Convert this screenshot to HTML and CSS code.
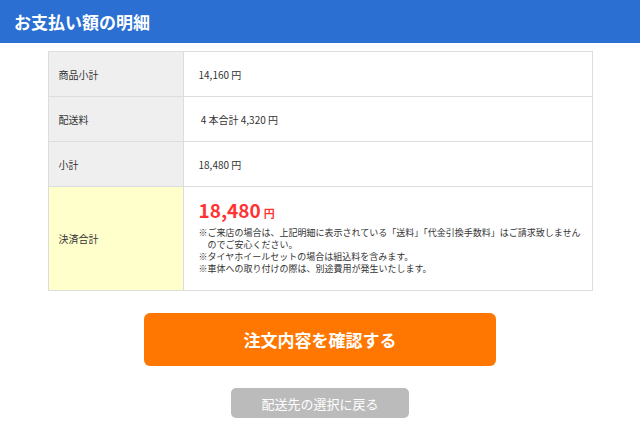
FILE: index.html
```html
<!DOCTYPE html>
<html>
<head>
    <title>お支払い額の明細</title>
    <link rel="stylesheet" href="styles.css">
</head>
<body>
    <div class="page-header">
        <h1>お支払い額の明細</h1>
    </div>

    <table class="detail-table">
        <tr>
            <th>商品小計</th>
            <td>14,160 円</td>
        </tr>
        <tr>
            <th>配送料</th>
            <td>&nbsp;4 本合計 4,320 円</td>
        </tr>
        <tr>
            <th>小計</th>
            <td>18,480 円</td>
        </tr>
        <tr class="total-row">
            <th>決済合計</th>
            <td>
                <div class="total-price">18,480<span class="yen">円</span></div>
                <ul class="notes">
                    <li>※ご来店の場合は、上記明細に表示されている「送料」「代金引換手数料」はご請求致しませんのでご安心ください。</li>
                    <li>※タイヤホイールセットの場合は組込料を含みます。</li>
                    <li>※車体への取り付けの際は、別途費用が発生いたします。</li>
                </ul>
            </td>
        </tr>
    </table>

    <div class="actions">
        <button type="button" class="confirm-button">注文内容を確認する</button>
        <button type="button" class="back-button">配送先の選択に戻る</button>
    </div>
</body>
</html>
```

FILE: styles.css
```css
/* Payment detail page */
body {
    margin: 0;
    font-family: "Noto Sans CJK JP", "Noto Sans", sans-serif;
    color: #333;
    background-color: #fff;
}

.page-header {
    background-color: #2a6fd1;
    height: 43px;
    display: flex;
    align-items: center;
    padding-left: 14px;
}

.page-header h1 {
    margin: 0;
    color: #fff;
    font-size: 17px;
    font-weight: bold;
}

.detail-table {
    width: 545px;
    margin: 8px auto 0;
    border-collapse: collapse;
    font-size: 10px;
}

.detail-table th,
.detail-table td {
    border: 1px solid #ddd;
    height: 44px;
    padding: 0;
    text-align: left;
    font-weight: normal;
}

.detail-table th {
    width: 124px;
    padding-left: 10px;
    background-color: #efefef;
}

.detail-table td {
    padding-left: 15px;
    padding-right: 6px;
}

.total-row th {
    background-color: #ffffcc;
}

.total-row td {
    padding-top: 12px;
    padding-bottom: 15px;
}

.total-price {
    color: #f33;
    font-size: 19px;
    font-weight: bold;
    line-height: 22px;
}

.total-price .yen {
    font-size: 11px;
    margin-left: 3px;
}

.notes {
    list-style: none;
    margin: 3px 0 0;
    padding: 0;
    font-size: 9px;
    line-height: 12px;
}

.notes li {
    padding-left: 1em;
    text-indent: -1em;
}

.actions {
    display: flex;
    flex-direction: column;
    align-items: center;
    margin-top: 22px;
}

.confirm-button {
    width: 352px;
    height: 53px;
    border: none;
    border-radius: 6px;
    background-color: #ff7700;
    color: #fff;
    font-family: inherit;
    font-size: 17px;
    font-weight: bold;
}

.back-button {
    width: 178px;
    height: 30px;
    margin-top: 22px;
    border: none;
    border-radius: 5px;
    background-color: #bbb;
    color: #fff;
    font-family: inherit;
    font-size: 13px;
}
```
